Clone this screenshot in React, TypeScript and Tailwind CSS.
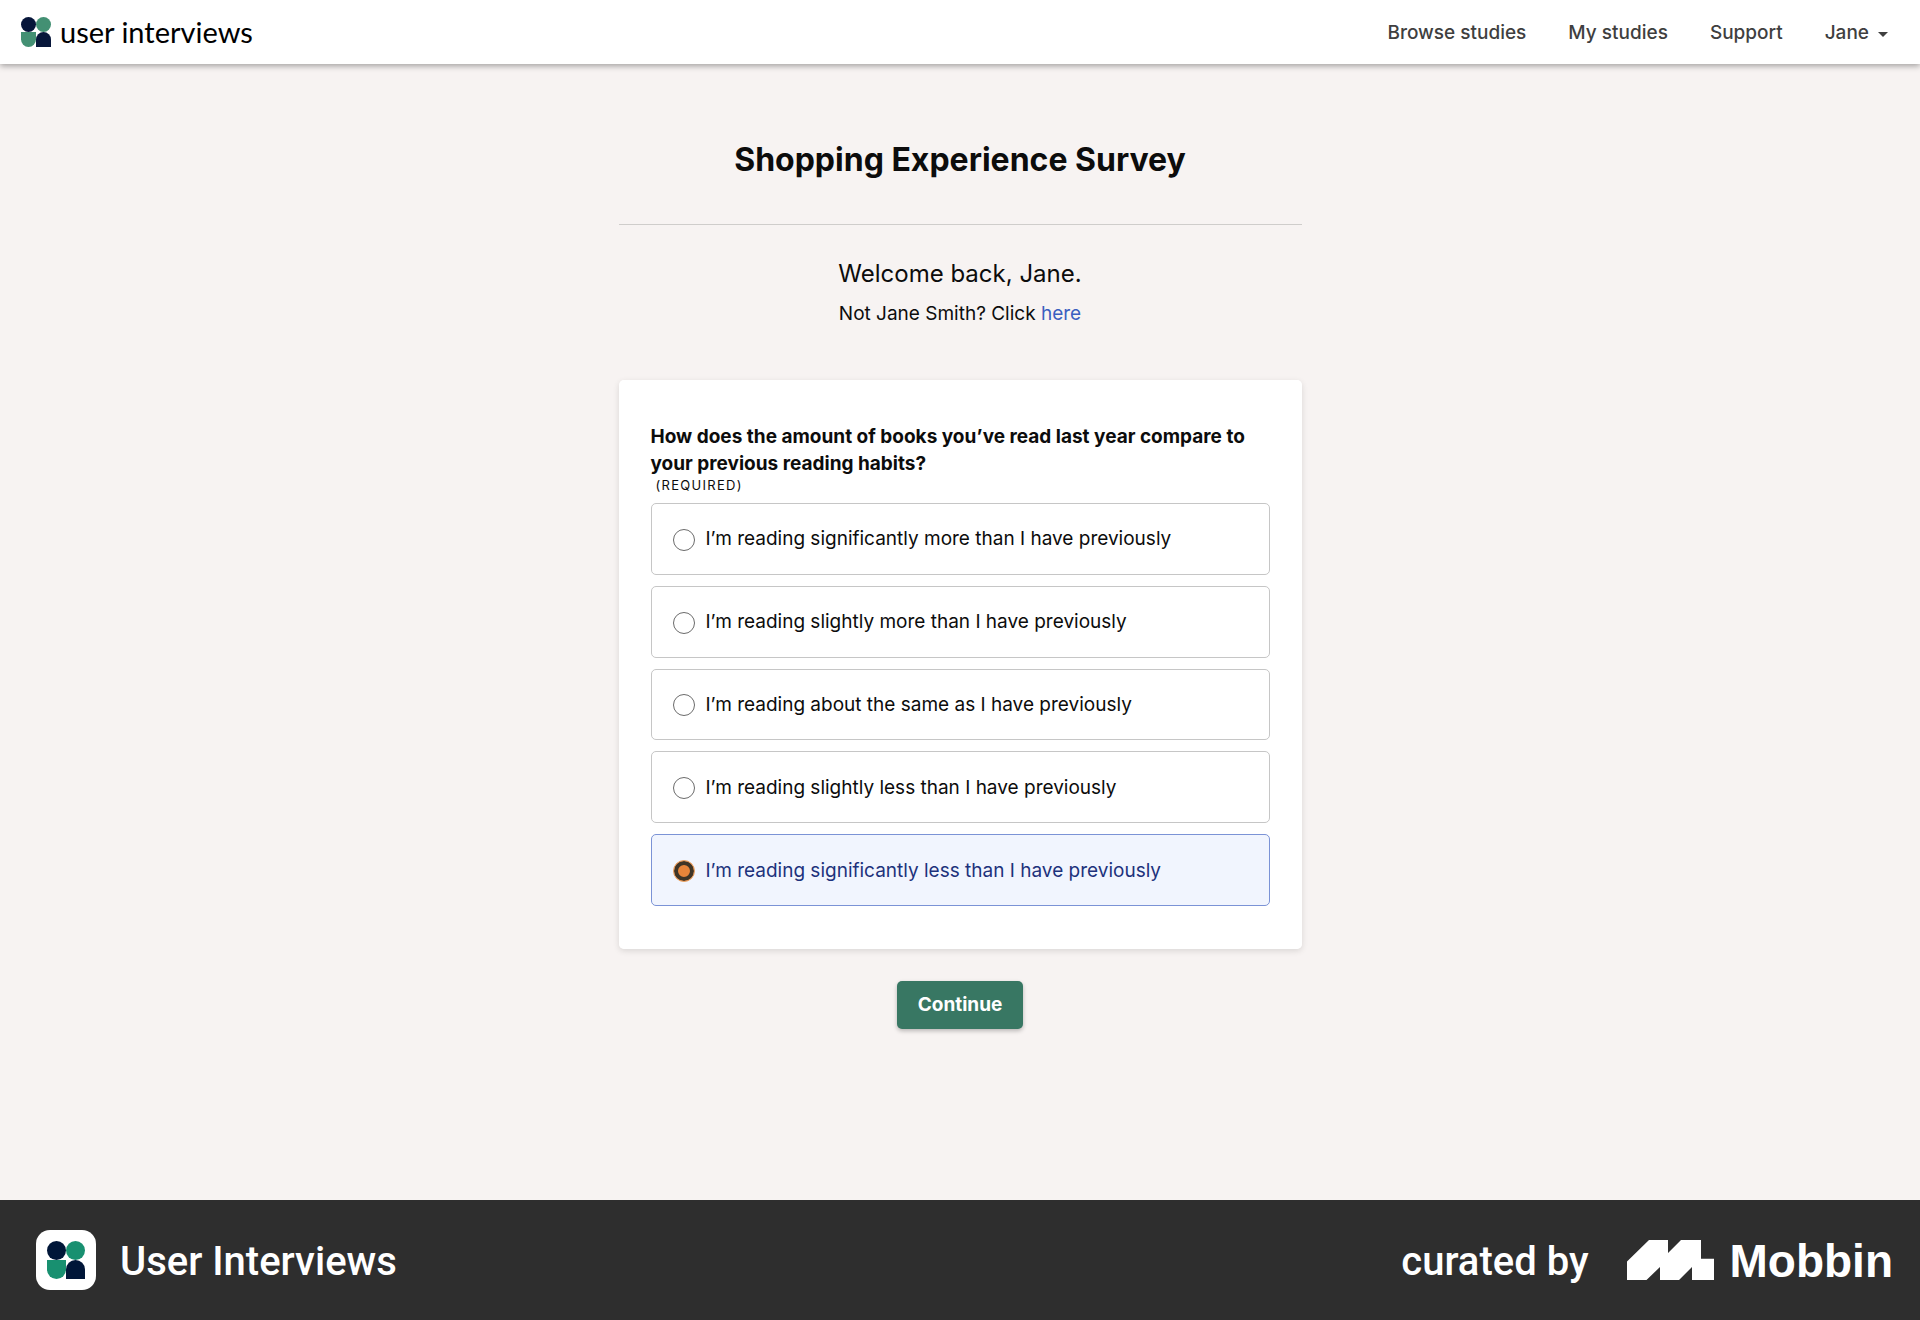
import { useState } from "react";

const links = ["Browse studies", "My studies", "Support"];

const options = [
  "I’m reading significantly more than I have previously",
  "I’m reading slightly more than I have previously",
  "I’m reading about the same as I have previously",
  "I’m reading slightly less than I have previously",
  "I’m reading significantly less than I have previously",
];

function PeopleMark({ className, navy, green }: { className: string; navy: string; green: string }) {
  return (
    <svg viewBox="0 0 40 40" className={className} aria-hidden="true">
      <circle cx="10" cy="10" r="10" fill={navy} />
      <circle cx="30" cy="10" r="10" fill={green} />
      <path d="M0 20h20v10a10 10 0 0 1-20 0z" fill={green} />
      <path d="M20 40V30a10 10 0 0 1 20 0v10z" fill={navy} />
    </svg>
  );
}

function Header() {
  return (
    <header className="relative flex h-16 items-center justify-between bg-white pr-8 pl-[21px] shadow-[0_2px_6px_rgba(0,0,0,0.35)]">
      <a href="#" className="flex items-center gap-[9px]">
        <PeopleMark className="size-[30px]" navy="#07163a" green="#439073" />
        <span className="font-['Lato',sans-serif] text-[29px] leading-8 text-black">user interviews</span>
      </a>
      <nav className="flex items-center gap-[42px] pt-[2px] text-[19px] leading-7 font-medium text-[#3f3f3f]">
        {links.map((l) => (
          <a key={l} href="#">{l}</a>
        ))}
        <button type="button" className="flex items-center gap-[9px]">
          Jane
          <svg viewBox="0 0 10 5" className="mt-[2px] h-[5px] w-[10px]" fill="currentColor" aria-hidden="true">
            <path d="M0 0h10L5 5z" />
          </svg>
        </button>
      </nav>
    </header>
  );
}

function Question() {
  const [selected, setSelected] = useState(4);
  return (
    <fieldset className="mt-[52px] rounded-[5px] bg-white px-8 py-[43px] shadow-[0_2px_6px_rgba(0,0,0,0.12)]">
      <legend className="float-left w-full text-[19px] leading-[27px] font-bold">
        How does the amount of books you’ve read last year compare to your previous reading habits?
      </legend>
      <p className="clear-both pl-[5px] text-[13px] leading-4 tracking-widest">(REQUIRED)</p>
      <div className="mt-[10px] grid min-h-[403px] auto-rows-fr gap-[11px]">
        {options.map((o, i) => (
          <label
            key={o}
            className="flex items-center gap-[11px] rounded-[5px] border border-[#c6c6c6] px-[21px] pt-px text-[19px] leading-7 has-checked:border-[#7b93d6] has-checked:bg-[#f1f5fe] has-checked:text-[#1d327c]"
          >
            <input
              type="radio"
              name="reading"
              checked={selected === i}
              onChange={() => setSelected(i)}
              className="mt-px size-[22px] shrink-0 appearance-none rounded-full border border-[#6b6b6b] bg-white checked:border-[#e8a265] checked:bg-[#e8853a] checked:shadow-[inset_0_0_0_4px_#3f3527]"
            />
            {o}
          </label>
        ))}
      </div>
    </fieldset>
  );
}

function Footer() {
  return (
    <footer className="flex h-[120px] items-center justify-between bg-[#2e2e2e] pr-[27px] pl-9 text-white">
      <div className="flex items-center gap-6">
        <div className="flex size-[60px] items-center justify-center rounded-[14px] bg-white">
          <PeopleMark className="size-[38px]" navy="#001638" green="#189070" />
        </div>
        <span className="pt-1 font-['Roboto',sans-serif] text-[40px] leading-[48px] font-medium">User Interviews</span>
      </div>
      <div className="flex items-center">
        <span className="pt-1 font-['Roboto',sans-serif] text-[40px] leading-[48px] font-medium">curated by</span>
        <a href="#" className="ml-[38px] flex items-center gap-4">
          <svg viewBox="0 0 87 40" className="h-10 w-[87px]" fill="currentColor" aria-hidden="true">
            <path d="M0 21.5 22 0h19v13L54 0h20v18.7h13V40H65V27L52 40H33V27L19.500 40H0z" />
          </svg>
          <span className="pt-px font-['Liberation_Sans',sans-serif] text-[46px] leading-[48px] font-bold">Mobbin</span>
        </a>
      </div>
    </footer>
  );
}

export default function App() {
  return (
    <div className="flex min-h-screen flex-col bg-[#f7f3f2] font-['Inter',sans-serif] text-[#0c0c0c]">
      <Header />
      <main className="mx-auto w-full max-w-[683px] flex-1">
        <h1 className="mt-[74px] border-b border-[#cfcdcb] pb-[43px] text-center text-[32px] leading-[43px] font-bold">
          Shopping Experience Survey
        </h1>
        <p className="mt-[33px] text-center text-2xl leading-8">Welcome back, Jane.</p>
        <p className="mt-[10px] text-center text-[19px] leading-[28px]">
          Not Jane Smith? Click <a href="#" className="text-[#3b5fc0]">here</a>
        </p>
        <Question />
        <div className="mt-8 flex justify-center">
          <button type="button" className="h-12 rounded-[5px] bg-[#387763] px-[21px] pt-px text-[19px] font-bold text-white shadow-[0_2px_4px_rgba(0,0,0,0.25)]">
            Continue
          </button>
        </div>
      </main>
      <Footer />
    </div>
  );
}
